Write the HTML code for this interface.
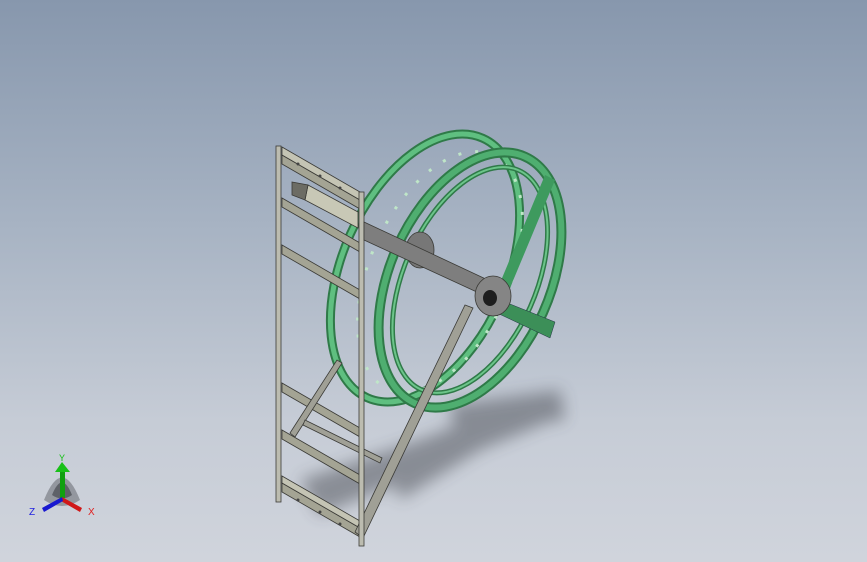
<!DOCTYPE html>
<html><head><style>
html,body{margin:0;padding:0;}
body{width:867px;height:562px;overflow:hidden;background:linear-gradient(#8797ad 0%,#a7b3c3 40%,#c6ccd6 75%,#d0d4dc 100%);}
svg{position:absolute;left:0;top:0}
</style></head><body>
<svg width="867" height="562" viewBox="0 0 867 562" xmlns="http://www.w3.org/2000/svg">
<defs>
<filter id="bl" x="-50%" y="-50%" width="200%" height="200%"><feGaussianBlur stdDeviation="8"/></filter>
</defs>
<!-- shadow -->
<g filter="url(#bl)" fill="#3a3d44" opacity="0.45">
<path d="M390 470 L480 420 L555 395 L565 415 L480 450 L400 500 Z"/>
<path d="M300 480 L420 440 L520 400 L535 420 L430 470 L320 515 Z"/>
<path d="M450 405 L560 390 L565 420 L455 430 Z"/>
</g>
<!-- back ring -->
<ellipse cx="425" cy="268" rx="82" ry="142" transform="rotate(24 425 268)" fill="none" stroke="#2f7a48" stroke-width="9"/>
<ellipse cx="425" cy="268" rx="82" ry="142" transform="rotate(24 425 268)" fill="none" stroke="#5fbf80" stroke-width="5"/>
<ellipse cx="440" cy="272" rx="70" ry="128" transform="rotate(24 440 272)" fill="none" stroke="#bfe6c8" stroke-width="3" stroke-dasharray="3 14"/>
<!-- front ring -->
<ellipse cx="470" cy="280" rx="80" ry="135" transform="rotate(24 470 280)" fill="none" stroke="#2f7a48" stroke-width="10"/>
<ellipse cx="470" cy="280" rx="80" ry="135" transform="rotate(24 470 280)" fill="none" stroke="#4fae70" stroke-width="6"/>
<ellipse cx="470" cy="280" rx="66" ry="120" transform="rotate(24 470 280)" fill="none" stroke="#2f7a48" stroke-width="5"/>
<ellipse cx="470" cy="280" rx="66" ry="120" transform="rotate(24 470 280)" fill="none" stroke="#6cc58a" stroke-width="2"/>
<!-- green cross spoke -->
<path d="M545 175 L555 180 L505 300 L495 295 Z" fill="#3e9a5e"/>
<path d="M500 300 L555 322 L550 338 L495 312 Z" fill="#3c8f58" stroke="#234" stroke-width="0.5"/>
<!-- frame -->
<g stroke="#3a3a36" stroke-width="0.8">
<path d="M282 155 L360 200 L360 209 L282 164 Z" fill="#a4a494"/>
<path d="M282 198 L360 243 L360 252 L282 207 Z" fill="#a4a494"/>
<path d="M282 245 L360 290 L360 299 L282 254 Z" fill="#a4a494"/>
<path d="M282 383 L360 428 L360 437 L282 392 Z" fill="#a4a494"/>
<path d="M282 430 L360 475 L360 484 L282 439 Z" fill="#a4a494"/>
<path d="M282 483 L360 528 L360 537 L282 492 Z" fill="#a4a494"/>
<path d="M282 147 L360 192 L360 200 L282 155 Z" fill="#c4c4b4"/>
<path d="M282 476 L360 521 L360 528 L282 483 Z" fill="#c4c4b4"/>
<path d="M308 185 L358 212 L358 228 L305 200 Z" fill="#c8c8b6"/>
<path d="M292 182 L308 185 L305 200 L292 195Z" fill="#6c6c64"/>
<!-- struts -->
<path d="M355 532 L465 305 L473 308 L363 538 Z" fill="#a0a096"/>
<path d="M290 433 L337 360 L342 363 L295 437 Z" fill="#a0a096"/>
<path d="M305 420 L382 458 L380 463 L303 425 Z" fill="#a0a096"/>
<!-- rails -->
<rect x="276" y="146" width="5" height="356" fill="#bcbcb0"/>
<rect x="359" y="192" width="5" height="354" fill="#bcbcb0"/>
<!-- arm -->
<ellipse cx="420" cy="250" rx="14" ry="18" fill="#777"/>
<path d="M364 222 L505 288 L505 305 L364 240 Z" fill="#7e7e7e"/>
<ellipse cx="493" cy="296" rx="18" ry="20" fill="#858585"/>
</g>
<ellipse cx="490" cy="298" rx="7" ry="8" fill="#1e1e1e"/>
<g fill="#444">
<circle cx="298" cy="164" r="1.5"/><circle cx="320" cy="176" r="1.5"/><circle cx="340" cy="188" r="1.5"/>
<circle cx="298" cy="500" r="1.5"/><circle cx="320" cy="512" r="1.5"/><circle cx="340" cy="524" r="1.5"/>
</g>
<!-- triad -->
<g>
<path d="M44 500 Q62 455 80 500 Q62 512 44 500Z" fill="#6e7178" opacity="0.6"/>
<path d="M52 495 Q62 470 72 495 Q62 502 52 495Z" fill="#3b3e44" opacity="0.6"/>
<rect x="60" y="470" width="5" height="28" fill="#10a010"/>
<path d="M55 472 L62 462 L70 472 Z" fill="#18c018"/>
<path d="M62 497 L82 508 L80 512 L61 501Z" fill="#d01818"/>
<path d="M62 497 L42 508 L44 512 L63 501Z" fill="#1818d0"/>
<text x="59" y="461" font-family="Liberation Sans,sans-serif" font-size="9" fill="#10c010">Y</text>
<text x="88" y="515" font-family="Liberation Sans,sans-serif" font-size="10" fill="#e02020">X</text>
<text x="29" y="515" font-family="Liberation Sans,sans-serif" font-size="10" fill="#2020e0">Z</text>
</g>
</svg>
</body></html>
